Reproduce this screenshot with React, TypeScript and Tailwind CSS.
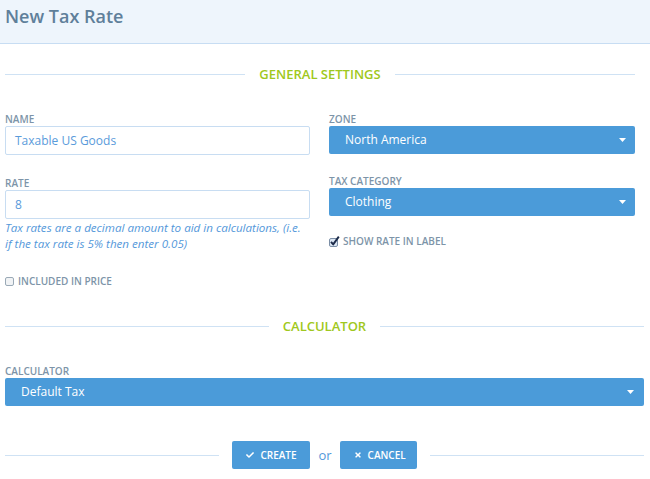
import React from "react";
import { FaCheck, FaTimes } from "react-icons/fa";

const Caret = () => (
  <svg width="7" height="4" viewBox="0 0 7 4" className="shrink-0">
    <path d="M0 0 L7 0 L3.5 4 Z" fill="#ffffff" />
  </svg>
);

const Label = ({ children }: { children: React.ReactNode }) => (
  <div className="h-[14px] text-[10px] leading-[14px] font-semibold uppercase text-[#7d94a8]">
    {children}
  </div>
);

const Select = ({ value, padRight = "pr-[9px]" }: { value: string; padRight?: string }) => (
  <div
    className={`h-[28px] rounded-[2px] bg-[#4b9bd9] flex items-center justify-between pl-[16px] ${padRight} text-white text-[12px]`}
  >
    <span>{value}</span>
    <Caret />
  </div>
);

const Input = ({ value }: { value: string }) => (
  <div className="h-[29px] rounded-[2px] border border-[#c8ddf2] bg-white flex items-center pl-[9px] text-[12px] text-[#5a9bdb]">
    {value}
  </div>
);

const Heading = ({ title, width }: { title: string; width: string }) => (
  <div className={`h-[20px] flex items-center ${width}`}>
    <div className="flex-1 h-px bg-[#cfe2f4]" />
    <div className="px-[14px] text-[13px] font-semibold text-[#9fc820] leading-[20px]">{title}</div>
    <div className="flex-1 h-px bg-[#cfe2f4]" />
  </div>
);

const Unchecked = () => (
  <svg width="9" height="9" viewBox="0 0 9 9" className="shrink-0">
    <rect x="0.5" y="0.5" width="8" height="8" rx="1.5" fill="#f1f3f5" stroke="#9aa9b6" />
  </svg>
);

const Checked = () => (
  <svg width="11" height="11" viewBox="0 0 11 11" className="shrink-0">
    <rect x="0.5" y="2.5" width="8" height="8" rx="1.5" fill="#dbe6f3" stroke="#7b8ea6" />
    <path d="M2 5.8 L4.2 8.4 L9.8 0.6" fill="none" stroke="#1c2b4a" strokeWidth="1.9" strokeLinejoin="round" />
  </svg>
);

export default function App() {
  return (
    <div className="w-[650px] h-[479px] bg-white overflow-hidden font-['Open_Sans',sans-serif]">
      <div className="h-[44px] bg-[#eef5fc] border-b border-[#c7ddf3] pl-[5px] pt-[4px]">
        <div className="text-[18px] leading-[24px] font-semibold text-[#5f7f9a]">New Tax Rate</div>
      </div>

      <div className="pl-[5px]">
        <div className="mt-[20px]">
          <Heading title="GENERAL SETTINGS" width="w-[630px]" />
        </div>

        <div className="mt-[28px] w-[630px] grid grid-cols-[305px_306px] gap-x-[19px]">
          <div>
            <Label>Name</Label>
            <Input value="Taxable US Goods" />
            <div className="mt-[21px]">
              <Label>Rate</Label>
            </div>
            <Input value="8" />
            <div className="mt-px w-[305px] text-[11.6px] leading-[16px] italic text-[#5498da]">
              Tax rates are a decimal amount to aid in calculations, (i.e. if the tax rate is 5% then enter 0.05)
            </div>
            <div className="mt-[22px] flex items-center gap-[4px] h-[14px]">
              <Unchecked />
              <Label>Included in price</Label>
            </div>
          </div>
          <div>
            <Label>Zone</Label>
            <Select value="North America" />
            <div className="mt-[20px]">
              <Label>Tax Category</Label>
            </div>
            <Select value="Clothing" />
            <div className="mt-[18px] flex items-center gap-[3px] h-[14px]">
              <Checked />
              <Label>Show rate in label</Label>
            </div>
          </div>
        </div>

        <div className="mt-[28px]">
          <Heading title="CALCULATOR" width="w-[639px]" />
        </div>

        <div className="mt-[28px] w-[639px]">
          <Label>Calculator</Label>
          <Select value="Default Tax" padRight="pr-[10px]" />
        </div>

        <div className="mt-[35px] w-[639px] h-[28px] flex items-center">
          <div className="flex-1 h-px bg-[#cfe2f4]" />
          <div className="flex items-center mx-[13px]">
            <div className="h-[28px] w-[78px] rounded-[2px] bg-[#4b9bd9] flex items-center pl-[14px] gap-[6px] text-white text-[10px] font-semibold">
              <FaCheck className="w-[8px] h-[8px]" />
              <span>CREATE</span>
            </div>
            <span className="mx-[8px] text-[13px] text-[#5498da] leading-[28px]">or</span>
            <div className="h-[28px] w-[77px] rounded-[2px] bg-[#4b9bd9] flex items-center pl-[14px] gap-[6px] text-white text-[10px] font-semibold">
              <FaTimes className="w-[8px] h-[8px]" />
              <span>CANCEL</span>
            </div>
          </div>
          <div className="flex-1 h-px bg-[#cfe2f4]" />
        </div>
      </div>
    </div>
  );
}
